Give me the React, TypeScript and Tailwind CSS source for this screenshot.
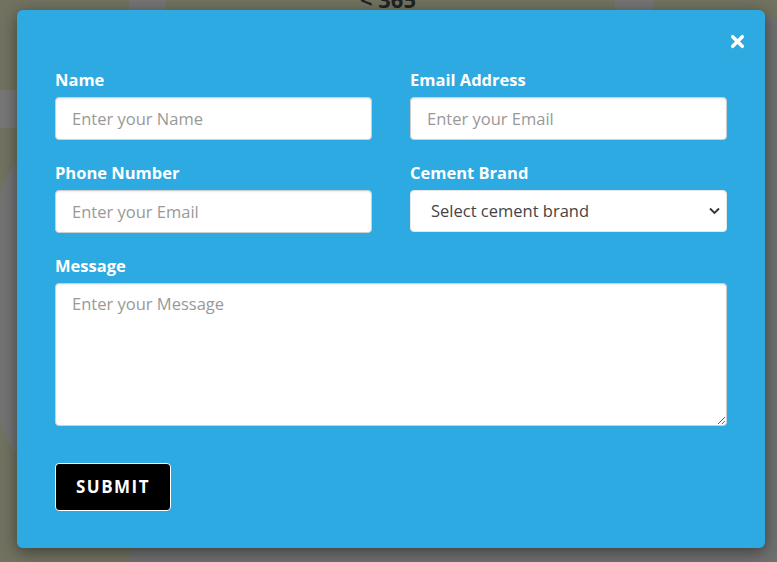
import React, { useState } from 'react';

const font = { fontFamily: '"Open Sans", "Noto Sans", sans-serif' };

const Field: React.FC<{ label: string; children: React.ReactNode }> = ({ label, children }) => (
  <div className="flex flex-col">
    <label className="mb-[5px] h-[24px] text-[16.5px] font-bold leading-[24px] text-white">{label}</label>
    {children}
  </div>
);

const inputCls =
  'h-[43px] w-full rounded-[4px] border border-[#cfcfcf] bg-white px-[16px] text-[16.5px] text-[#333] shadow-[inset_0_1px_2px_rgba(0,0,0,0.08)] outline-none placeholder:text-[#999]';

export default function App() {
  const [brand, setBrand] = useState('');

  return (
    <div className="relative h-[562px] w-[777px] overflow-hidden bg-[#727261]" style={font}>
      {/* dimmed page behind the modal */}
      <div className="flex h-[18px] items-start">
        <div className="ml-[129px] h-[10px] w-[37px] bg-[#747474]" />
        <div className="ml-[194px] -mt-[12px] text-[22px] font-bold leading-[22px] text-[#222]">&lt; 365</div>
        <div className="ml-auto mr-[124px] h-[10px] w-[38px] bg-[#747474]" />
      </div>
      <div className="flex h-[544px]">
        <div className="flex w-[129px] flex-col">
          <div className="h-[72px]" />
          <div className="h-[38px] bg-[#777777]" />
          <div className="h-[17px]" />
          <div className="h-[327px] rounded-tl-[60px] rounded-bl-[60px] bg-[#737373]" />
        </div>
        <div className="flex-1 bg-[#707070]" />
      </div>

      {/* modal */}
      <div className="absolute left-[17px] top-[10px] h-[538px] w-[748px] rounded-[6px] bg-[#2eaae3] px-[38px] pt-[58px] shadow-[0_4px_16px_rgba(0,0,0,0.45)]">
        <button className="absolute right-[18px] top-[21px] flex h-[20px] w-[20px] items-center justify-center text-white">
          <svg width="15" height="15" viewBox="0 0 14 14">
            <path d="M2.5 2.5 L11.5 11.5 M11.5 2.5 L2.5 11.5" stroke="white" strokeWidth="3.2" strokeLinecap="round" />
          </svg>
        </button>

        <form className="flex flex-col" onSubmit={(e) => e.preventDefault()}>
          <div className="grid grid-cols-2 gap-x-[38px] gap-y-[21px]">
            <Field label="Name">
              <input className={inputCls} placeholder="Enter your Name" />
            </Field>
            <Field label="Email Address">
              <input className={inputCls} placeholder="Enter your Email" />
            </Field>
            <Field label="Phone Number">
              <input className={inputCls} placeholder="Enter your Email" />
            </Field>
            <Field label="Cement Brand">
              <div className="relative">
                <select
                  value={brand}
                  onChange={(e) => setBrand(e.target.value)}
                  className="h-[42px] w-full appearance-none rounded-[4px] border border-[#e6e6e6] bg-white pl-[20px] text-[16.5px] text-[#444] outline-none"
                  style={font}
                >
                  <option value="">Select cement brand</option>
                  <option value="a">Brand A</option>
                  <option value="b">Brand B</option>
                </select>
                <svg className="pointer-events-none absolute right-[7px] top-[17px]" width="11" height="8" viewBox="0 0 11 8">
                  <path d="M1 1.5 L5.5 6 L10 1.5" fill="none" stroke="#333" strokeWidth="1.8" />
                </svg>
              </div>
            </Field>
            <div className="col-span-2">
              <Field label="Message">
                <textarea
                  className="h-[143px] w-full rounded-[4px] border border-[#cfcfcf] bg-white px-[16px] py-[8px] text-[16.5px] text-[#333] shadow-[inset_0_1px_2px_rgba(0,0,0,0.08)] outline-none placeholder:text-[#999]"
                  placeholder="Enter your Message"
                  style={font}
                />
              </Field>
            </div>
          </div>

          <div className="mt-[37px]">
            <button
              type="submit"
              className="h-[48px] w-[116px] rounded-[4px] border border-white bg-black text-[17px] font-bold tracking-[1.5px] text-white"
            >
              SUBMIT
            </button>
          </div>
        </form>
      </div>
    </div>
  );
}
